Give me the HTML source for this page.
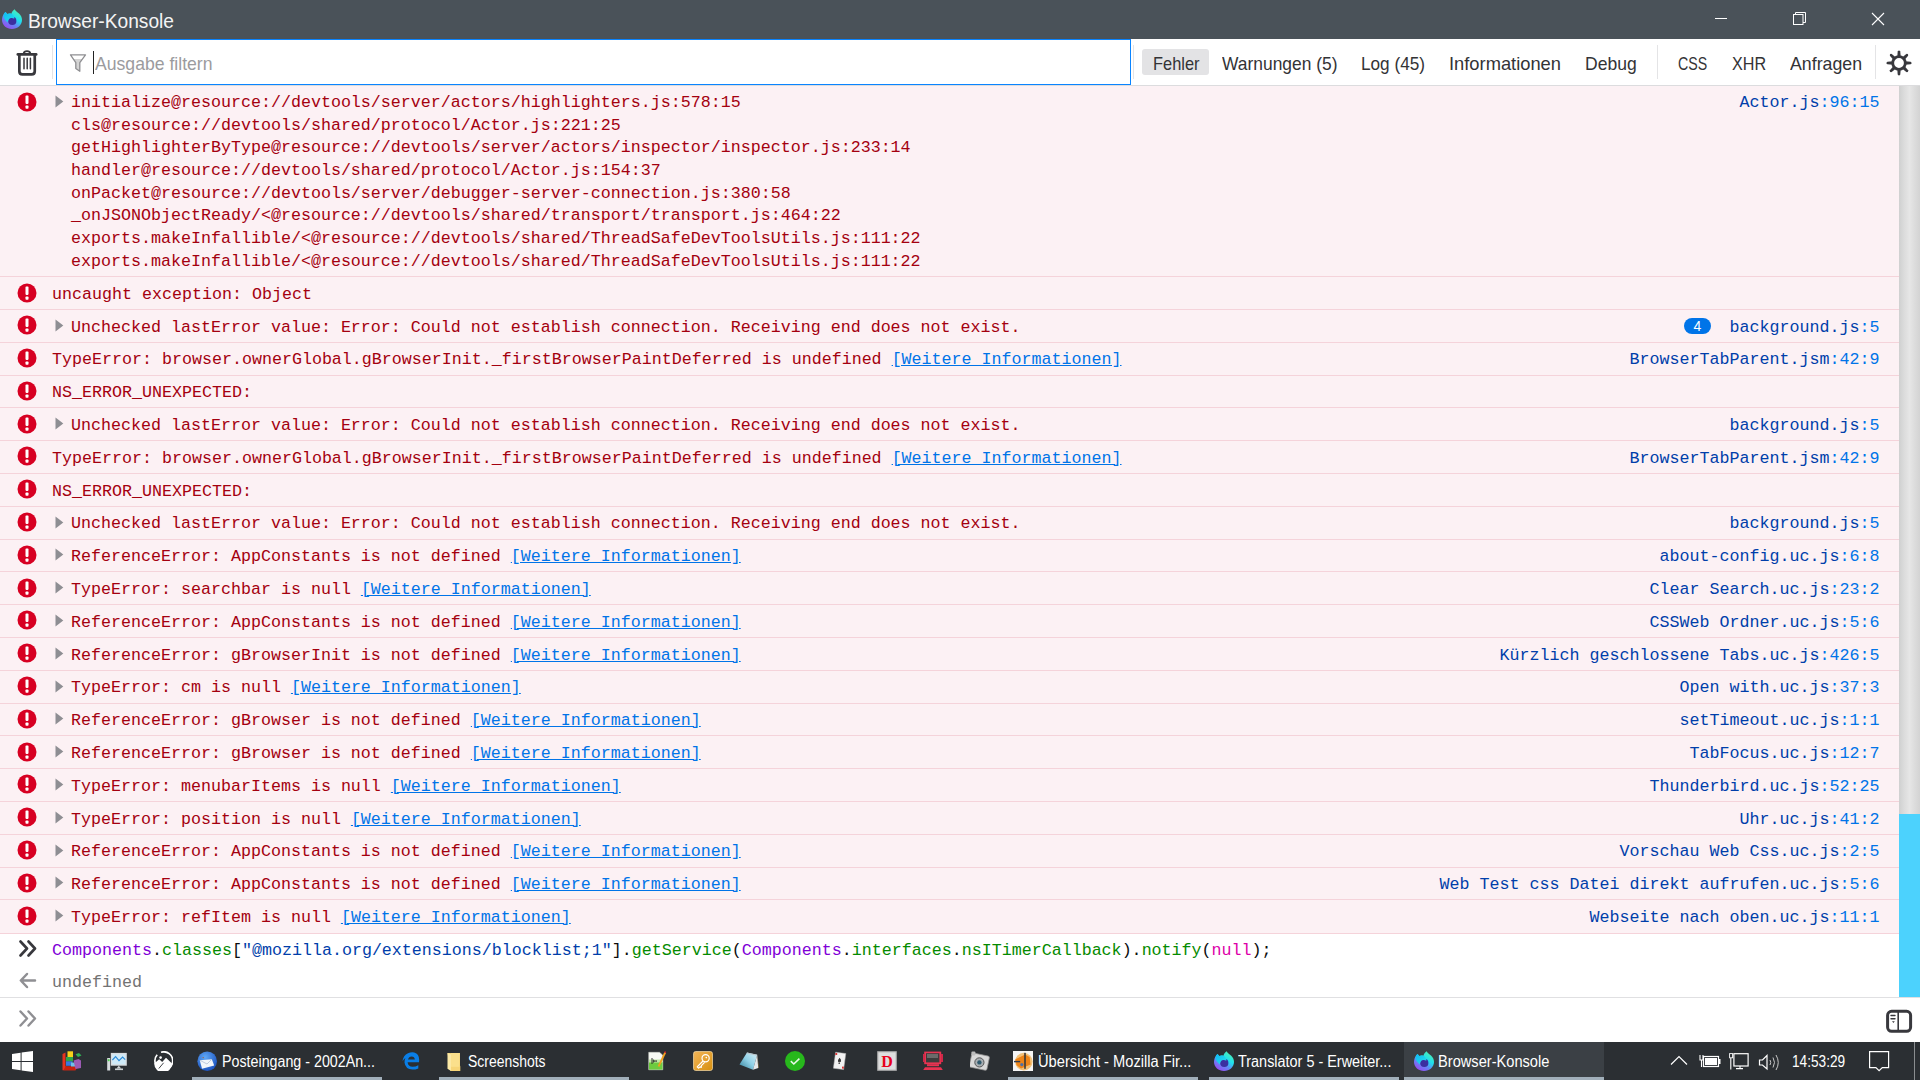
<!DOCTYPE html>
<html><head><meta charset="utf-8"><title>Browser-Konsole</title>
<style>
html,body{margin:0;padding:0;width:1920px;height:1080px;overflow:hidden;background:#fff}
.s{position:absolute;white-space:pre;font-family:'Liberation Sans', sans-serif;transform-origin:0 0}
.m{position:absolute;white-space:pre;font-family:'Liberation Mono', monospace;font-size:16.66px;line-height:20px}
</style></head><body>
<div style="position:absolute;left:0;top:0;width:1920px;height:39px;background:#4a5259"></div>
<svg width="20" height="20" viewBox="0 0 20 20" style="position:absolute;left:2px;top:9px">
<defs><linearGradient id="fg0" x1="0.85" y1="0" x2="0.2" y2="1"><stop offset="0" stop-color="#58f0a8"/><stop offset="0.4" stop-color="#1ee0ee"/><stop offset="0.68" stop-color="#6a80f6"/><stop offset="1" stop-color="#9c44ee"/></linearGradient>
<linearGradient id="fh0" x1="0" y1="0" x2="1" y2="1"><stop offset="0" stop-color="#10b8f6"/><stop offset="1" stop-color="#24e0e6"/></linearGradient></defs>
<path d="M12.6 0.2 C13.6 1.8 15.2 3.2 17 4.6 C19 6.5 20 8.6 20 11 C20 16 15.5 20 10 20 C4.5 20 0 16 0 11 C0 8.4 1 6 2.2 4.2 L3.6 3 L5.2 5 C6.6 4.3 8 4.3 9.4 4.8 C9.8 3 11 1.2 12.6 0.2 Z" fill="url(#fg0)"/>
<circle cx="10.3" cy="11.9" r="4.1" fill="#3b2fa0"/>
<path d="M2.2 4.2 L3.6 3 L5.2 5 C6.6 4.3 8 4.3 9.4 4.8 C11.5 6 12.8 8.2 12.2 9.8 C10.6 8.6 8.2 8.8 6.8 10.4 C6.1 11.2 5.9 12.3 6.1 13.4 C3.4 11.6 1.5 9.2 1.6 7 Z" fill="url(#fh0)"/>
</svg>
<div class="s" id="s0" style="left:28px;top:7.0px;font-size:21px;line-height:27px;color:#f4f4f4;transform:scaleX(0.9130);">Browser-Konsole</div>
<svg width="200" height="39" style="position:absolute;left:1700px;top:0" viewBox="0 0 200 39"><rect x="15" y="18" width="12" height="1" fill="#fff"/><rect x="93.5" y="14.5" width="9.5" height="10" fill="none" stroke="#fff" stroke-width="1"/><path d="M95.5 14.5 V12.5 H105.5 V22.5 H103" fill="none" stroke="#fff" stroke-width="1"/><path d="M172 13 L184 25 M184 13 L172 25" stroke="#fff" stroke-width="1.1"/></svg>
<div style="position:absolute;left:0;top:39px;width:1920px;height:46px;background:#fff"></div>
<div style="position:absolute;left:0;top:85px;width:1920px;height:1px;background:#dcdcde"></div>
<svg width="24" height="30" viewBox="0 0 24 30" style="position:absolute;left:15px;top:48px"><path d="M2.8 6.4 H21.2" stroke="#38383d" stroke-width="2.6" stroke-linecap="round"/><path d="M8.6 5.6 Q9 3.1 12 3.1 Q15 3.1 15.4 5.6" fill="none" stroke="#38383d" stroke-width="1.8"/><path d="M4.35 6.5 V23.3 Q4.35 26.45 7.5 26.45 H16.6 Q19.75 26.45 19.75 23.3 V6.5" fill="none" stroke="#38383d" stroke-width="2.7"/><path d="M9 10.2 V20.8 M12.2 10.2 V20.8 M15.4 10.2 V20.8" stroke="#38383d" stroke-width="1.5" stroke-linecap="round"/></svg>
<div style="position:absolute;left:52px;top:45px;width:1px;height:34px;background:#e4e4e6"></div>
<div style="position:absolute;left:56px;top:39px;width:1073px;height:44px;border:1px solid #0a84ff;background:#fff"></div>
<svg width="18" height="20" viewBox="0 0 18 20" style="position:absolute;left:69px;top:53px"><path d="M4.3 5.9 L13.5 5.9 L10.8 9.6 L10.8 18.3 L6.8 15.5 L6.8 9.6 Z" fill="#d4d4d4"/><path d="M1.5 1.8 H16.5 L10.8 9.6 V18.3 L6.8 15.5 V9.6 Z" fill="none" stroke="#8f8f92" stroke-width="1.3" stroke-linejoin="round"/></svg>
<div style="position:absolute;left:93px;top:51px;width:1.3px;height:23px;background:#222"></div>
<div class="s" id="s1" style="left:94.5px;top:51.0px;font-size:19px;line-height:25px;color:#9b9b9e;transform:scaleX(0.9270);">Ausgabe filtern</div>
<div style="position:absolute;left:1133px;top:45px;width:1px;height:34px;background:#e4e4e6"></div>
<div style="position:absolute;left:1142px;top:49px;width:67px;height:26px;background:#e3e3e5;border-radius:3px"></div>
<div class="s" id="s2" style="left:1152.5px;top:51.2px;font-size:19px;line-height:25px;color:#333336;transform:scaleX(0.8634);">Fehler</div>
<div class="s" id="s3" style="left:1222px;top:51.2px;font-size:19px;line-height:25px;color:#333336;transform:scaleX(0.9164);">Warnungen (5)</div>
<div class="s" id="s4" style="left:1361px;top:51.2px;font-size:19px;line-height:25px;color:#333336;transform:scaleX(0.9042);">Log (45)</div>
<div class="s" id="s5" style="left:1448.8px;top:51.2px;font-size:19px;line-height:25px;color:#333336;transform:scaleX(0.9640);">Informationen</div>
<div class="s" id="s6" style="left:1585px;top:51.2px;font-size:19px;line-height:25px;color:#333336;transform:scaleX(0.9232);">Debug</div>
<div style="position:absolute;left:1657px;top:45px;width:1px;height:34px;background:#e4e4e6"></div>
<div class="s" id="s7" style="left:1678.3px;top:51.2px;font-size:19px;line-height:25px;color:#333336;transform:scaleX(0.7472);">CSS</div>
<div class="s" id="s8" style="left:1731.9px;top:51.2px;font-size:19px;line-height:25px;color:#333336;transform:scaleX(0.8498);">XHR</div>
<div class="s" id="s9" style="left:1789.8px;top:51.2px;font-size:19px;line-height:25px;color:#333336;transform:scaleX(0.9348);">Anfragen</div>
<div style="position:absolute;left:1875px;top:45px;width:1px;height:34px;background:#e4e4e6"></div>
<svg width="28" height="28" viewBox="-14 -14 28 28" style="position:absolute;left:1885px;top:49px"><path d="M-1.7 -6 L-1.3 -11.6 Q0 -13.6 1.3 -11.6 L1.7 -6 Z" fill="#38383d" transform="rotate(0)"/><path d="M-1.7 -6 L-1.3 -11.6 Q0 -13.6 1.3 -11.6 L1.7 -6 Z" fill="#38383d" transform="rotate(45)"/><path d="M-1.7 -6 L-1.3 -11.6 Q0 -13.6 1.3 -11.6 L1.7 -6 Z" fill="#38383d" transform="rotate(90)"/><path d="M-1.7 -6 L-1.3 -11.6 Q0 -13.6 1.3 -11.6 L1.7 -6 Z" fill="#38383d" transform="rotate(135)"/><path d="M-1.7 -6 L-1.3 -11.6 Q0 -13.6 1.3 -11.6 L1.7 -6 Z" fill="#38383d" transform="rotate(180)"/><path d="M-1.7 -6 L-1.3 -11.6 Q0 -13.6 1.3 -11.6 L1.7 -6 Z" fill="#38383d" transform="rotate(225)"/><path d="M-1.7 -6 L-1.3 -11.6 Q0 -13.6 1.3 -11.6 L1.7 -6 Z" fill="#38383d" transform="rotate(270)"/><path d="M-1.7 -6 L-1.3 -11.6 Q0 -13.6 1.3 -11.6 L1.7 -6 Z" fill="#38383d" transform="rotate(315)"/><circle cx="0" cy="0" r="6.3" fill="none" stroke="#38383d" stroke-width="2.8"/></svg>
<div style="position:absolute;left:0;top:86px;width:1899px;height:848px;background:#fcf1f4"></div>
<svg width="20" height="20" viewBox="0 0 20 20" style="position:absolute;left:17.1px;top:91.5px"><circle cx="10" cy="10" r="9.5" fill="#d70022"/><rect x="8.5" y="3.6" width="3" height="8.3" rx="0.8" fill="#fff"/><rect x="8.5" y="13.5" width="3" height="3.2" rx="0.8" fill="#fff"/></svg>
<svg width="9" height="13" viewBox="0 0 9 13" style="position:absolute;left:55px;top:95.00px"><path d="M0.5 0.5 L8.3 6.5 L0.5 12.5 Z" fill="#8e8e93"/></svg>
<div class="m" style="left:71px;top:93.0px;color:#a4000f;">initialize@resource://devtools/server/actors/highlighters.js:578:15</div>
<div class="m" style="left:71px;top:115.69px;color:#a4000f;">cls@resource://devtools/shared/protocol/Actor.js:221:25</div>
<div class="m" style="left:71px;top:138.38px;color:#a4000f;">getHighlighterByType@resource://devtools/server/actors/inspector/inspector.js:233:14</div>
<div class="m" style="left:71px;top:161.07px;color:#a4000f;">handler@resource://devtools/shared/protocol/Actor.js:154:37</div>
<div class="m" style="left:71px;top:183.76px;color:#a4000f;">onPacket@resource://devtools/server/debugger-server-connection.js:380:58</div>
<div class="m" style="left:71px;top:206.45px;color:#a4000f;">_onJSONObjectReady/&lt;@resource://devtools/shared/transport/transport.js:464:22</div>
<div class="m" style="left:71px;top:229.14px;color:#a4000f;">exports.makeInfallible/&lt;@resource://devtools/shared/ThreadSafeDevToolsUtils.js:111:22</div>
<div class="m" style="left:71px;top:251.82999999999998px;color:#a4000f;">exports.makeInfallible/&lt;@resource://devtools/shared/ThreadSafeDevToolsUtils.js:111:22</div>
<div class="m" style="right:40.59999999999991px;top:93px;"><span style="color:#003eaa">Actor.js</span><span style="color:#0074e8">:96:15</span></div>
<div style="position:absolute;left:0;top:276px;width:1899px;height:1px;background:#f5d3da"></div>
<div style="position:absolute;left:0;top:309px;width:1899px;height:1px;background:#f5d3da"></div>
<svg width="20" height="20" viewBox="0 0 20 20" style="position:absolute;left:17.1px;top:282.5px"><circle cx="10" cy="10" r="9.5" fill="#d70022"/><rect x="8.5" y="3.6" width="3" height="8.3" rx="0.8" fill="#fff"/><rect x="8.5" y="13.5" width="3" height="3.2" rx="0.8" fill="#fff"/></svg>
<div class="m" style="left:52px;top:284.9px;color:#a4000f;">uncaught exception: Object</div>
<div style="position:absolute;left:0;top:342px;width:1899px;height:1px;background:#f5d3da"></div>
<svg width="20" height="20" viewBox="0 0 20 20" style="position:absolute;left:17.1px;top:315.29px"><circle cx="10" cy="10" r="9.5" fill="#d70022"/><rect x="8.5" y="3.6" width="3" height="8.3" rx="0.8" fill="#fff"/><rect x="8.5" y="13.5" width="3" height="3.2" rx="0.8" fill="#fff"/></svg>
<svg width="9" height="13" viewBox="0 0 9 13" style="position:absolute;left:55px;top:318.89px"><path d="M0.5 0.5 L8.3 6.5 L0.5 12.5 Z" fill="#8e8e93"/></svg>
<div class="m" style="left:71px;top:317.69px;color:#a4000f;">Unchecked lastError value: Error: Could not establish connection. Receiving end does not exist.</div>
<div class="m" style="right:40.59999999999991px;top:317.69px;"><span style="color:#003eaa">background.js</span><span style="color:#0074e8">:5</span></div>
<div style="position:absolute;left:1684px;top:318.09px;width:27px;height:16px;border-radius:8px;background:#0074e8;color:#fff;font-family:'Liberation Sans', sans-serif;font-size:14px;line-height:17px;text-align:center">4</div>
<div style="position:absolute;left:0;top:375px;width:1899px;height:1px;background:#f5d3da"></div>
<svg width="20" height="20" viewBox="0 0 20 20" style="position:absolute;left:17.1px;top:348.08px"><circle cx="10" cy="10" r="9.5" fill="#d70022"/><rect x="8.5" y="3.6" width="3" height="8.3" rx="0.8" fill="#fff"/><rect x="8.5" y="13.5" width="3" height="3.2" rx="0.8" fill="#fff"/></svg>
<div class="m" style="left:52px;top:350.48px;color:#a4000f;">TypeError: browser.ownerGlobal.gBrowserInit._firstBrowserPaintDeferred is undefined <span style="color:#0074e8;text-decoration:underline">[Weitere Informationen]</span></div>
<div class="m" style="right:40.59999999999991px;top:350.48px;"><span style="color:#003eaa">BrowserTabParent.jsm</span><span style="color:#0074e8">:42:9</span></div>
<div style="position:absolute;left:0;top:407px;width:1899px;height:1px;background:#f5d3da"></div>
<svg width="20" height="20" viewBox="0 0 20 20" style="position:absolute;left:17.1px;top:380.87px"><circle cx="10" cy="10" r="9.5" fill="#d70022"/><rect x="8.5" y="3.6" width="3" height="8.3" rx="0.8" fill="#fff"/><rect x="8.5" y="13.5" width="3" height="3.2" rx="0.8" fill="#fff"/></svg>
<div class="m" style="left:52px;top:383.27px;color:#a4000f;">NS_ERROR_UNEXPECTED:</div>
<div style="position:absolute;left:0;top:440px;width:1899px;height:1px;background:#f5d3da"></div>
<svg width="20" height="20" viewBox="0 0 20 20" style="position:absolute;left:17.1px;top:413.66px"><circle cx="10" cy="10" r="9.5" fill="#d70022"/><rect x="8.5" y="3.6" width="3" height="8.3" rx="0.8" fill="#fff"/><rect x="8.5" y="13.5" width="3" height="3.2" rx="0.8" fill="#fff"/></svg>
<svg width="9" height="13" viewBox="0 0 9 13" style="position:absolute;left:55px;top:417.26px"><path d="M0.5 0.5 L8.3 6.5 L0.5 12.5 Z" fill="#8e8e93"/></svg>
<div class="m" style="left:71px;top:416.06px;color:#a4000f;">Unchecked lastError value: Error: Could not establish connection. Receiving end does not exist.</div>
<div class="m" style="right:40.59999999999991px;top:416.06px;"><span style="color:#003eaa">background.js</span><span style="color:#0074e8">:5</span></div>
<div style="position:absolute;left:0;top:473px;width:1899px;height:1px;background:#f5d3da"></div>
<svg width="20" height="20" viewBox="0 0 20 20" style="position:absolute;left:17.1px;top:446.45px"><circle cx="10" cy="10" r="9.5" fill="#d70022"/><rect x="8.5" y="3.6" width="3" height="8.3" rx="0.8" fill="#fff"/><rect x="8.5" y="13.5" width="3" height="3.2" rx="0.8" fill="#fff"/></svg>
<div class="m" style="left:52px;top:448.85px;color:#a4000f;">TypeError: browser.ownerGlobal.gBrowserInit._firstBrowserPaintDeferred is undefined <span style="color:#0074e8;text-decoration:underline">[Weitere Informationen]</span></div>
<div class="m" style="right:40.59999999999991px;top:448.85px;"><span style="color:#003eaa">BrowserTabParent.jsm</span><span style="color:#0074e8">:42:9</span></div>
<div style="position:absolute;left:0;top:506px;width:1899px;height:1px;background:#f5d3da"></div>
<svg width="20" height="20" viewBox="0 0 20 20" style="position:absolute;left:17.1px;top:479.24px"><circle cx="10" cy="10" r="9.5" fill="#d70022"/><rect x="8.5" y="3.6" width="3" height="8.3" rx="0.8" fill="#fff"/><rect x="8.5" y="13.5" width="3" height="3.2" rx="0.8" fill="#fff"/></svg>
<div class="m" style="left:52px;top:481.64px;color:#a4000f;">NS_ERROR_UNEXPECTED:</div>
<div style="position:absolute;left:0;top:539px;width:1899px;height:1px;background:#f5d3da"></div>
<svg width="20" height="20" viewBox="0 0 20 20" style="position:absolute;left:17.1px;top:512.03px"><circle cx="10" cy="10" r="9.5" fill="#d70022"/><rect x="8.5" y="3.6" width="3" height="8.3" rx="0.8" fill="#fff"/><rect x="8.5" y="13.5" width="3" height="3.2" rx="0.8" fill="#fff"/></svg>
<svg width="9" height="13" viewBox="0 0 9 13" style="position:absolute;left:55px;top:515.63px"><path d="M0.5 0.5 L8.3 6.5 L0.5 12.5 Z" fill="#8e8e93"/></svg>
<div class="m" style="left:71px;top:514.43px;color:#a4000f;">Unchecked lastError value: Error: Could not establish connection. Receiving end does not exist.</div>
<div class="m" style="right:40.59999999999991px;top:514.43px;"><span style="color:#003eaa">background.js</span><span style="color:#0074e8">:5</span></div>
<div style="position:absolute;left:0;top:571px;width:1899px;height:1px;background:#f5d3da"></div>
<svg width="20" height="20" viewBox="0 0 20 20" style="position:absolute;left:17.1px;top:544.82px"><circle cx="10" cy="10" r="9.5" fill="#d70022"/><rect x="8.5" y="3.6" width="3" height="8.3" rx="0.8" fill="#fff"/><rect x="8.5" y="13.5" width="3" height="3.2" rx="0.8" fill="#fff"/></svg>
<svg width="9" height="13" viewBox="0 0 9 13" style="position:absolute;left:55px;top:548.42px"><path d="M0.5 0.5 L8.3 6.5 L0.5 12.5 Z" fill="#8e8e93"/></svg>
<div class="m" style="left:71px;top:547.22px;color:#a4000f;">ReferenceError: AppConstants is not defined <span style="color:#0074e8;text-decoration:underline">[Weitere Informationen]</span></div>
<div class="m" style="right:40.59999999999991px;top:547.22px;"><span style="color:#003eaa">about-config.uc.js</span><span style="color:#0074e8">:6:8</span></div>
<div style="position:absolute;left:0;top:604px;width:1899px;height:1px;background:#f5d3da"></div>
<svg width="20" height="20" viewBox="0 0 20 20" style="position:absolute;left:17.1px;top:577.61px"><circle cx="10" cy="10" r="9.5" fill="#d70022"/><rect x="8.5" y="3.6" width="3" height="8.3" rx="0.8" fill="#fff"/><rect x="8.5" y="13.5" width="3" height="3.2" rx="0.8" fill="#fff"/></svg>
<svg width="9" height="13" viewBox="0 0 9 13" style="position:absolute;left:55px;top:581.21px"><path d="M0.5 0.5 L8.3 6.5 L0.5 12.5 Z" fill="#8e8e93"/></svg>
<div class="m" style="left:71px;top:580.01px;color:#a4000f;">TypeError: searchbar is null <span style="color:#0074e8;text-decoration:underline">[Weitere Informationen]</span></div>
<div class="m" style="right:40.59999999999991px;top:580.01px;"><span style="color:#003eaa">Clear Search.uc.js</span><span style="color:#0074e8">:23:2</span></div>
<div style="position:absolute;left:0;top:637px;width:1899px;height:1px;background:#f5d3da"></div>
<svg width="20" height="20" viewBox="0 0 20 20" style="position:absolute;left:17.1px;top:610.4px"><circle cx="10" cy="10" r="9.5" fill="#d70022"/><rect x="8.5" y="3.6" width="3" height="8.3" rx="0.8" fill="#fff"/><rect x="8.5" y="13.5" width="3" height="3.2" rx="0.8" fill="#fff"/></svg>
<svg width="9" height="13" viewBox="0 0 9 13" style="position:absolute;left:55px;top:614.00px"><path d="M0.5 0.5 L8.3 6.5 L0.5 12.5 Z" fill="#8e8e93"/></svg>
<div class="m" style="left:71px;top:612.8px;color:#a4000f;">ReferenceError: AppConstants is not defined <span style="color:#0074e8;text-decoration:underline">[Weitere Informationen]</span></div>
<div class="m" style="right:40.59999999999991px;top:612.8px;"><span style="color:#003eaa">CSSWeb Ordner.uc.js</span><span style="color:#0074e8">:5:6</span></div>
<div style="position:absolute;left:0;top:670px;width:1899px;height:1px;background:#f5d3da"></div>
<svg width="20" height="20" viewBox="0 0 20 20" style="position:absolute;left:17.1px;top:643.19px"><circle cx="10" cy="10" r="9.5" fill="#d70022"/><rect x="8.5" y="3.6" width="3" height="8.3" rx="0.8" fill="#fff"/><rect x="8.5" y="13.5" width="3" height="3.2" rx="0.8" fill="#fff"/></svg>
<svg width="9" height="13" viewBox="0 0 9 13" style="position:absolute;left:55px;top:646.79px"><path d="M0.5 0.5 L8.3 6.5 L0.5 12.5 Z" fill="#8e8e93"/></svg>
<div class="m" style="left:71px;top:645.59px;color:#a4000f;">ReferenceError: gBrowserInit is not defined <span style="color:#0074e8;text-decoration:underline">[Weitere Informationen]</span></div>
<div class="m" style="right:40.59999999999991px;top:645.59px;"><span style="color:#003eaa">Kürzlich geschlossene Tabs.uc.js</span><span style="color:#0074e8">:426:5</span></div>
<div style="position:absolute;left:0;top:703px;width:1899px;height:1px;background:#f5d3da"></div>
<svg width="20" height="20" viewBox="0 0 20 20" style="position:absolute;left:17.1px;top:675.98px"><circle cx="10" cy="10" r="9.5" fill="#d70022"/><rect x="8.5" y="3.6" width="3" height="8.3" rx="0.8" fill="#fff"/><rect x="8.5" y="13.5" width="3" height="3.2" rx="0.8" fill="#fff"/></svg>
<svg width="9" height="13" viewBox="0 0 9 13" style="position:absolute;left:55px;top:679.58px"><path d="M0.5 0.5 L8.3 6.5 L0.5 12.5 Z" fill="#8e8e93"/></svg>
<div class="m" style="left:71px;top:678.38px;color:#a4000f;">TypeError: cm is null <span style="color:#0074e8;text-decoration:underline">[Weitere Informationen]</span></div>
<div class="m" style="right:40.59999999999991px;top:678.38px;"><span style="color:#003eaa">Open with.uc.js</span><span style="color:#0074e8">:37:3</span></div>
<div style="position:absolute;left:0;top:735px;width:1899px;height:1px;background:#f5d3da"></div>
<svg width="20" height="20" viewBox="0 0 20 20" style="position:absolute;left:17.1px;top:708.77px"><circle cx="10" cy="10" r="9.5" fill="#d70022"/><rect x="8.5" y="3.6" width="3" height="8.3" rx="0.8" fill="#fff"/><rect x="8.5" y="13.5" width="3" height="3.2" rx="0.8" fill="#fff"/></svg>
<svg width="9" height="13" viewBox="0 0 9 13" style="position:absolute;left:55px;top:712.37px"><path d="M0.5 0.5 L8.3 6.5 L0.5 12.5 Z" fill="#8e8e93"/></svg>
<div class="m" style="left:71px;top:711.17px;color:#a4000f;">ReferenceError: gBrowser is not defined <span style="color:#0074e8;text-decoration:underline">[Weitere Informationen]</span></div>
<div class="m" style="right:40.59999999999991px;top:711.17px;"><span style="color:#003eaa">setTimeout.uc.js</span><span style="color:#0074e8">:1:1</span></div>
<div style="position:absolute;left:0;top:768px;width:1899px;height:1px;background:#f5d3da"></div>
<svg width="20" height="20" viewBox="0 0 20 20" style="position:absolute;left:17.1px;top:741.56px"><circle cx="10" cy="10" r="9.5" fill="#d70022"/><rect x="8.5" y="3.6" width="3" height="8.3" rx="0.8" fill="#fff"/><rect x="8.5" y="13.5" width="3" height="3.2" rx="0.8" fill="#fff"/></svg>
<svg width="9" height="13" viewBox="0 0 9 13" style="position:absolute;left:55px;top:745.16px"><path d="M0.5 0.5 L8.3 6.5 L0.5 12.5 Z" fill="#8e8e93"/></svg>
<div class="m" style="left:71px;top:743.96px;color:#a4000f;">ReferenceError: gBrowser is not defined <span style="color:#0074e8;text-decoration:underline">[Weitere Informationen]</span></div>
<div class="m" style="right:40.59999999999991px;top:743.96px;"><span style="color:#003eaa">TabFocus.uc.js</span><span style="color:#0074e8">:12:7</span></div>
<div style="position:absolute;left:0;top:801px;width:1899px;height:1px;background:#f5d3da"></div>
<svg width="20" height="20" viewBox="0 0 20 20" style="position:absolute;left:17.1px;top:774.35px"><circle cx="10" cy="10" r="9.5" fill="#d70022"/><rect x="8.5" y="3.6" width="3" height="8.3" rx="0.8" fill="#fff"/><rect x="8.5" y="13.5" width="3" height="3.2" rx="0.8" fill="#fff"/></svg>
<svg width="9" height="13" viewBox="0 0 9 13" style="position:absolute;left:55px;top:777.95px"><path d="M0.5 0.5 L8.3 6.5 L0.5 12.5 Z" fill="#8e8e93"/></svg>
<div class="m" style="left:71px;top:776.75px;color:#a4000f;">TypeError: menubarItems is null <span style="color:#0074e8;text-decoration:underline">[Weitere Informationen]</span></div>
<div class="m" style="right:40.59999999999991px;top:776.75px;"><span style="color:#003eaa">Thunderbird.uc.js</span><span style="color:#0074e8">:52:25</span></div>
<div style="position:absolute;left:0;top:834px;width:1899px;height:1px;background:#f5d3da"></div>
<svg width="20" height="20" viewBox="0 0 20 20" style="position:absolute;left:17.1px;top:807.14px"><circle cx="10" cy="10" r="9.5" fill="#d70022"/><rect x="8.5" y="3.6" width="3" height="8.3" rx="0.8" fill="#fff"/><rect x="8.5" y="13.5" width="3" height="3.2" rx="0.8" fill="#fff"/></svg>
<svg width="9" height="13" viewBox="0 0 9 13" style="position:absolute;left:55px;top:810.74px"><path d="M0.5 0.5 L8.3 6.5 L0.5 12.5 Z" fill="#8e8e93"/></svg>
<div class="m" style="left:71px;top:809.54px;color:#a4000f;">TypeError: position is null <span style="color:#0074e8;text-decoration:underline">[Weitere Informationen]</span></div>
<div class="m" style="right:40.59999999999991px;top:809.54px;"><span style="color:#003eaa">Uhr.uc.js</span><span style="color:#0074e8">:41:2</span></div>
<div style="position:absolute;left:0;top:867px;width:1899px;height:1px;background:#f5d3da"></div>
<svg width="20" height="20" viewBox="0 0 20 20" style="position:absolute;left:17.1px;top:839.93px"><circle cx="10" cy="10" r="9.5" fill="#d70022"/><rect x="8.5" y="3.6" width="3" height="8.3" rx="0.8" fill="#fff"/><rect x="8.5" y="13.5" width="3" height="3.2" rx="0.8" fill="#fff"/></svg>
<svg width="9" height="13" viewBox="0 0 9 13" style="position:absolute;left:55px;top:843.53px"><path d="M0.5 0.5 L8.3 6.5 L0.5 12.5 Z" fill="#8e8e93"/></svg>
<div class="m" style="left:71px;top:842.33px;color:#a4000f;">ReferenceError: AppConstants is not defined <span style="color:#0074e8;text-decoration:underline">[Weitere Informationen]</span></div>
<div class="m" style="right:40.59999999999991px;top:842.33px;"><span style="color:#003eaa">Vorschau Web Css.uc.js</span><span style="color:#0074e8">:2:5</span></div>
<div style="position:absolute;left:0;top:899px;width:1899px;height:1px;background:#f5d3da"></div>
<svg width="20" height="20" viewBox="0 0 20 20" style="position:absolute;left:17.1px;top:872.72px"><circle cx="10" cy="10" r="9.5" fill="#d70022"/><rect x="8.5" y="3.6" width="3" height="8.3" rx="0.8" fill="#fff"/><rect x="8.5" y="13.5" width="3" height="3.2" rx="0.8" fill="#fff"/></svg>
<svg width="9" height="13" viewBox="0 0 9 13" style="position:absolute;left:55px;top:876.32px"><path d="M0.5 0.5 L8.3 6.5 L0.5 12.5 Z" fill="#8e8e93"/></svg>
<div class="m" style="left:71px;top:875.12px;color:#a4000f;">ReferenceError: AppConstants is not defined <span style="color:#0074e8;text-decoration:underline">[Weitere Informationen]</span></div>
<div class="m" style="right:40.59999999999991px;top:875.12px;"><span style="color:#003eaa">Web Test css Datei direkt aufrufen.uc.js</span><span style="color:#0074e8">:5:6</span></div>
<div style="position:absolute;left:0;top:933px;width:1899px;height:1px;background:#f5d3da"></div>
<svg width="20" height="20" viewBox="0 0 20 20" style="position:absolute;left:17.1px;top:905.51px"><circle cx="10" cy="10" r="9.5" fill="#d70022"/><rect x="8.5" y="3.6" width="3" height="8.3" rx="0.8" fill="#fff"/><rect x="8.5" y="13.5" width="3" height="3.2" rx="0.8" fill="#fff"/></svg>
<svg width="9" height="13" viewBox="0 0 9 13" style="position:absolute;left:55px;top:909.11px"><path d="M0.5 0.5 L8.3 6.5 L0.5 12.5 Z" fill="#8e8e93"/></svg>
<div class="m" style="left:71px;top:907.91px;color:#a4000f;">TypeError: refItem is null <span style="color:#0074e8;text-decoration:underline">[Weitere Informationen]</span></div>
<div class="m" style="right:40.59999999999991px;top:907.91px;"><span style="color:#003eaa">Webseite nach oben.uc.js</span><span style="color:#0074e8">:11:1</span></div>
<svg width="18" height="18" viewBox="0 0 18 18" style="position:absolute;left:19px;top:940px"><path d="M1.5 1.5 L8 8.5 L1.5 15.5 M9.5 1.5 L16 8.5 L9.5 15.5" fill="none" stroke="#38383d" stroke-width="2.6" stroke-linecap="round" stroke-linejoin="round"/></svg>
<div class="m" style="left:52px;top:941px;color:#0c0c0d;"><span style="color:#8000d7">Components</span>.<span style="color:#058b00">classes</span>[<span style="color:#003eaa">"@mozilla.org/extensions/blocklist;1"</span>].<span style="color:#058b00">getService</span>(<span style="color:#8000d7">Components</span>.<span style="color:#058b00">interfaces</span>.<span style="color:#058b00">nsITimerCallback</span>).<span style="color:#058b00">notify</span>(<span style="color:#dd00a9">null</span>);</div>
<svg width="18" height="18" viewBox="0 0 18 18" style="position:absolute;left:19px;top:972px"><path d="M8 2 L1.8 8.5 L8 15 M2 8.5 H16" fill="none" stroke="#8f8f93" stroke-width="2.5" stroke-linecap="round" stroke-linejoin="round"/></svg>
<div class="m" style="left:52px;top:973px;color:#737373;">undefined</div>
<div style="position:absolute;left:0;top:997px;width:1899px;height:1px;background:#e0e0e2"></div>
<div style="position:absolute;left:0;top:997px;width:1920px;height:1px;background:#e0e0e2"></div>
<svg width="18" height="18" viewBox="0 0 18 18" style="position:absolute;left:19px;top:1009.5px"><path d="M1.5 1.5 L8 8.5 L1.5 15.5 M9.5 1.5 L16 8.5 L9.5 15.5" fill="none" stroke="#8f8f93" stroke-width="2.4" stroke-linecap="round" stroke-linejoin="round"/></svg>
<svg width="28" height="25" viewBox="0 0 28 25" style="position:absolute;left:1885px;top:1009px"><rect x="2.6" y="2.3" width="23" height="20" rx="4" fill="none" stroke="#38383d" stroke-width="3"/><path d="M13.2 3 V22" stroke="#38383d" stroke-width="1.6"/><path d="M6 6.5 H10 M6 9.8 H10" stroke="#38383d" stroke-width="1.4" stroke-linecap="round"/><path d="M7 12.3 H9.8 L8.4 14 Z" fill="#38383d"/></svg>
<div style="position:absolute;left:1899px;top:86px;width:21px;height:728px;background:linear-gradient(90deg,#cfd0d0 0%,#dcdcdc 25%,#e6e6e6 50%,#dcdcdc 75%,#d3d3d3 100%)"></div>
<div style="position:absolute;left:1899px;top:814px;width:21px;height:183px;background:#4cd2fd"></div>
<div style="position:absolute;left:0;top:1042px;width:1920px;height:38px;background:#2b2f33"></div>
<div style="position:absolute;left:1404px;top:1042px;width:200px;height:35px;background:#3b4045"></div>
<div style="position:absolute;left:192px;top:1077px;width:190px;height:3px;background:#a1afba"></div>
<div style="position:absolute;left:439px;top:1077px;width:190px;height:3px;background:#a1afba"></div>
<div style="position:absolute;left:1008px;top:1077px;width:190px;height:3px;background:#a1afba"></div>
<div style="position:absolute;left:1209px;top:1077px;width:190px;height:3px;background:#a1afba"></div>
<div style="position:absolute;left:1404px;top:1077px;width:200px;height:3px;background:#a1afba"></div>
<svg width="21" height="21" viewBox="0 0 21 21" style="position:absolute;left:12px;top:1051px"><path d="M0 2.9 L8.6 1.7 V10 H0 Z M9.6 1.5 L21 0 V10 H9.6 Z M0 11 H8.6 V19.3 L0 18.1 Z M9.6 11 H21 V21 L9.6 19.5 Z" fill="#fff"/></svg>
<svg width="20" height="20" viewBox="0 0 20 20" style="position:absolute;left:61.5px;top:1051px"><path d="M0.5 3 L3.5 1.5 L3.5 15.5 L15.5 15.5 L13.5 19.2 L0.5 19.2 Z" fill="#e8321e"/><path d="M3.5 15.5 L15.5 15.5 L13.5 19.2 L1.5 19.2Z" fill="#c8200f"/><rect x="5.5" y="0.3" width="5.5" height="6.5" fill="#f7d21a"/><rect x="4" y="6" width="7" height="4.5" fill="#2fa548"/><rect x="4" y="10.3" width="6.5" height="4.5" fill="#3a78e0"/><rect x="9" y="11.5" width="4.5" height="4" fill="#6fc0e8"/><path d="M11.5 9.5 L16.5 8 L19 9.5 L19 17 L13.5 18 Z" fill="#9c5ab4"/><path d="M13.5 3.2 L17 2 L19.5 4.6 L16 6 Z" fill="#2fb155"/></svg>
<svg width="20" height="20" viewBox="0 0 20 20" style="position:absolute;left:106.5px;top:1051px"><rect x="3.8" y="1.9" width="16" height="12.8" fill="#d9dde0"/><rect x="5.2" y="3.3" width="13.2" height="10" fill="#cfeaf8"/><path d="M5.4 9 L8.6 5.6 L12 9.6 L15.6 6 L18.2 8.6" fill="none" stroke="#2a8ad8" stroke-width="1.1"/><path d="M9.5 17.5 L11.8 14.7 L14.2 17.5Z" fill="#cfd3d6"/><rect x="8" y="17.5" width="8" height="1.6" fill="#c8cdd0"/><rect x="0.2" y="7" width="3" height="12.5" fill="#d8dcdf"/><rect x="0.8" y="8.2" width="1.8" height="2" fill="#4fd24f"/></svg>
<svg width="20" height="20" viewBox="0 0 20 20" style="position:absolute;left:153px;top:1051px"><path d="M4.2 3.8 A8.9 8.9 0 1 0 8 1.3" fill="none" stroke="#fff" stroke-width="1.7"/><path d="M1.2 12.5 L6.2 8.2 L9.2 11 L13 6.8 L19 12.6 A8.9 8.9 0 0 1 1.2 12.5Z" fill="#fff"/><path d="M5.8 17.5 L10.6 11.8" stroke="#2b2f33" stroke-width="0.9"/><circle cx="7.6" cy="6.6" r="1.3" fill="#fff"/></svg>
<svg width="20" height="20" viewBox="0 0 20 20" style="position:absolute;left:196.8px;top:1051px"><defs><radialGradient id="tbg" cx="0.4" cy="0.3" r="0.8"><stop offset="0" stop-color="#5fa8f5"/><stop offset="1" stop-color="#1448b8"/></radialGradient></defs><circle cx="10.2" cy="10.2" r="9.8" fill="url(#tbg)"/><path d="M2.8 9.2 L14.8 8.2 L17.2 14.5 L5 17.8 Z" fill="#f2f5fa"/><path d="M2.8 9.2 L10 13 L14.8 8.2" fill="none" stroke="#b9c6da" stroke-width="0.9"/><circle cx="6.2" cy="6.6" r="0.7" fill="#b85a2a"/></svg>
<svg width="20" height="20" viewBox="0 0 20 20" style="position:absolute;left:401.5px;top:1051px"><path d="M17 11.3 H5.6 Q6 15.6 10.6 15.8 Q13.6 15.8 16.3 14.2 V17.4 Q13.6 18.6 10.4 18.6 Q3.4 18.4 2.5 11.6 Q2.4 9 3.4 7 Q1.4 8.2 0.6 10.2 Q1.2 4.2 6 2.2 Q9 0.8 12.2 1.4 Q17.2 2.6 17.2 9 Z M6 8.4 H12.8 Q12.6 5.4 9.6 5.4 Q6.8 5.5 6 8.4Z" fill="#0a7ee6"/></svg>
<svg width="20" height="20" viewBox="0 0 20 20" style="position:absolute;left:446.5px;top:1051px"><path d="M0.5 2 H13 V14.5 L13.3 15.5 V20 H3.5 Z" fill="#f7d577"/><path d="M4 2 H12.5 V15.8 H4Z" fill="#fbe08c"/><path d="M0.5 2 L4 3.2 L4 20 L0.5 17.8 Z" fill="#fce9a6"/></svg>
<svg width="20" height="20" viewBox="0 0 20 20" style="position:absolute;left:647.5px;top:1051px"><path d="M0.7 1.3 H11.5 L14.8 4.2 V18.8 H0.7 Z" fill="#f7f9f4" stroke="#c9cfc4" stroke-width="0.5"/><rect x="1" y="11" width="13.6" height="7.6" fill="#6dcb3f"/><rect x="1" y="8.5" width="13.6" height="3" fill="#c3e8a8"/><path d="M4 7 V13 M5.4 8.6 V11.6 M6.8 9.2 V11 M8.2 9.2 V11" stroke="#222" stroke-width="0.9"/><path d="M10.5 15.5 L17.2 1.5" stroke="#f0a020" stroke-width="1.8"/><circle cx="17.2" cy="1.2" r="0.9" fill="#c8202e"/></svg>
<svg width="20" height="20" viewBox="0 0 20 20" style="position:absolute;left:693px;top:1051px"><defs><linearGradient id="kg" x1="0" y1="0" x2="1" y2="1"><stop offset="0" stop-color="#f3b559"/><stop offset="1" stop-color="#d7900f"/></linearGradient></defs><rect x="0.5" y="0.5" width="19" height="19" rx="2.2" fill="url(#kg)" stroke="#f8dca8" stroke-width="0.7"/><circle cx="12.6" cy="7.2" r="3.6" fill="none" stroke="#fff" stroke-width="1.2"/><circle cx="13.3" cy="6.6" r="0.8" fill="#fff"/><path d="M10 10 L4.2 15.8 L5.6 17.2 L7 15.8 L8.2 16.4 L8.4 14.6 L11.6 11.4" fill="none" stroke="#fff" stroke-width="1.2" stroke-linejoin="round"/></svg>
<svg width="20" height="20" viewBox="0 0 20 20" style="position:absolute;left:739px;top:1051px"><defs><linearGradient id="ng" x1="0" y1="1" x2="1" y2="0"><stop offset="0" stop-color="#2f7e98"/><stop offset="0.5" stop-color="#8fd0e6"/><stop offset="1" stop-color="#d8f0f8"/></linearGradient></defs><path d="M0.5 13.5 L8 1.5 L18.2 3.8 L14 18.8 Z" fill="url(#ng)"/><path d="M18.2 3.8 L19.2 17 L14 18.8Z" fill="#e6e8ea"/><path d="M19.2 17 L18.6 4.5 L19.6 16.8Z" fill="#c9a050"/><path d="M8 1.5 L18.2 3.8 L17.8 4.8 L7.6 2.6Z" fill="#b9c4ca"/></svg>
<svg width="20" height="20" viewBox="0 0 20 20" style="position:absolute;left:785px;top:1051px"><circle cx="10" cy="10" r="10" fill="#27b81c"/><path d="M5.8 10.2 L8.8 13 L14.4 7.6" fill="none" stroke="#e8f8e6" stroke-width="1.6"/></svg>
<svg width="20" height="20" viewBox="0 0 20 20" style="position:absolute;left:832.5px;top:1051px"><path d="M2.6 1.2 L12.8 2.6 L10.6 18.6 L0.4 17.2 Z" fill="#f2f2f2" stroke="#b8b8b8" stroke-width="0.5"/><path d="M6.6 6.8 Q8.4 8.4 8 10.6 Q6.8 12 5.2 11 Q4.2 9.2 6.6 6.8Z M6.2 10.6 L5.4 13 L7 13Z" fill="#333"/><rect x="2.4" y="2" width="1.8" height="2" fill="#d33"/><rect x="9" y="15.6" width="1.8" height="2" fill="#d33"/></svg>
<svg width="20" height="20" viewBox="0 0 20 20" style="position:absolute;left:877px;top:1051px"><rect x="0.2" y="0.2" width="19.6" height="19.6" fill="#b4b4b4"/><rect x="1.4" y="1.4" width="17.2" height="17.2" fill="#dedede"/><text x="10" y="16.3" font-family="Liberation Serif" font-weight="bold" font-size="16" text-anchor="middle" fill="#e8001c">D</text></svg>
<svg width="20" height="20" viewBox="0 0 20 20" style="position:absolute;left:922.5px;top:1051px"><rect x="1.2" y="0.6" width="17" height="12.6" fill="#e83452"/><rect x="3" y="2.2" width="13.4" height="9.2" fill="#3c3c3c"/><rect x="4" y="3" width="11" height="4" fill="#6a6a6a"/><rect x="0" y="3" width="1.6" height="8" fill="#d02848"/><rect x="17.8" y="3" width="2.2" height="8" fill="#d02848"/><rect x="4" y="13.2" width="12" height="2" fill="#e83452"/><path d="M0.2 19 L2 16.2 H18 L19.8 19 Z" fill="#e83452"/></svg>
<svg width="20" height="20" viewBox="0 0 20 20" style="position:absolute;left:969.5px;top:1051px"><rect x="0.5" y="3.5" width="18" height="14.5" rx="1.6" fill="#d9d9d9" stroke="#8e8e8e" stroke-width="0.7" transform="rotate(12 10 10)"/><rect x="1.4" y="0.6" width="4" height="4" rx="1" fill="#bdbdbd"/><circle cx="9.4" cy="11.4" r="4.6" fill="#a8aeb2" stroke="#555" stroke-width="1"/><circle cx="9.4" cy="11.4" r="2.2" fill="#2f5a6e"/></svg>
<svg width="20" height="20" viewBox="0 0 20 20" style="position:absolute;left:1012.6px;top:1051px"><rect x="0" y="0" width="20.6" height="20.6" fill="#f6f6f6"/><circle cx="10.8" cy="10.6" r="8.8" fill="#f3c27a"/><path d="M2.2 8.4 L12.2 3.4 L16.6 6 L17.6 13.6 L8 17.6 L3.6 14.2 Z" fill="#ee8418"/><rect x="11.2" y="1.8" width="1.6" height="16" fill="#3a3a3a"/><path d="M1 10.6 H7.2" stroke="#2f3c52" stroke-width="1.4"/><circle cx="8.8" cy="13.6" r="1.6" fill="#4d6fa8"/></svg>
<svg width="20" height="20" viewBox="0 0 20 20" style="position:absolute;left:1214px;top:1051px">
<defs><linearGradient id="fg1" x1="0.85" y1="0" x2="0.2" y2="1"><stop offset="0" stop-color="#58f0a8"/><stop offset="0.4" stop-color="#1ee0ee"/><stop offset="0.68" stop-color="#6a80f6"/><stop offset="1" stop-color="#9c44ee"/></linearGradient>
<linearGradient id="fh1" x1="0" y1="0" x2="1" y2="1"><stop offset="0" stop-color="#10b8f6"/><stop offset="1" stop-color="#24e0e6"/></linearGradient></defs>
<path d="M12.6 0.2 C13.6 1.8 15.2 3.2 17 4.6 C19 6.5 20 8.6 20 11 C20 16 15.5 20 10 20 C4.5 20 0 16 0 11 C0 8.4 1 6 2.2 4.2 L3.6 3 L5.2 5 C6.6 4.3 8 4.3 9.4 4.8 C9.8 3 11 1.2 12.6 0.2 Z" fill="url(#fg1)"/>
<circle cx="10.3" cy="11.9" r="4.1" fill="#3b2fa0"/>
<path d="M2.2 4.2 L3.6 3 L5.2 5 C6.6 4.3 8 4.3 9.4 4.8 C11.5 6 12.8 8.2 12.2 9.8 C10.6 8.6 8.2 8.8 6.8 10.4 C6.1 11.2 5.9 12.3 6.1 13.4 C3.4 11.6 1.5 9.2 1.6 7 Z" fill="url(#fh1)"/>
</svg>
<svg width="20" height="20" viewBox="0 0 20 20" style="position:absolute;left:1414px;top:1051px">
<defs><linearGradient id="fg2" x1="0.85" y1="0" x2="0.2" y2="1"><stop offset="0" stop-color="#58f0a8"/><stop offset="0.4" stop-color="#1ee0ee"/><stop offset="0.68" stop-color="#6a80f6"/><stop offset="1" stop-color="#9c44ee"/></linearGradient>
<linearGradient id="fh2" x1="0" y1="0" x2="1" y2="1"><stop offset="0" stop-color="#10b8f6"/><stop offset="1" stop-color="#24e0e6"/></linearGradient></defs>
<path d="M12.6 0.2 C13.6 1.8 15.2 3.2 17 4.6 C19 6.5 20 8.6 20 11 C20 16 15.5 20 10 20 C4.5 20 0 16 0 11 C0 8.4 1 6 2.2 4.2 L3.6 3 L5.2 5 C6.6 4.3 8 4.3 9.4 4.8 C9.8 3 11 1.2 12.6 0.2 Z" fill="url(#fg2)"/>
<circle cx="10.3" cy="11.9" r="4.1" fill="#3b2fa0"/>
<path d="M2.2 4.2 L3.6 3 L5.2 5 C6.6 4.3 8 4.3 9.4 4.8 C11.5 6 12.8 8.2 12.2 9.8 C10.6 8.6 8.2 8.8 6.8 10.4 C6.1 11.2 5.9 12.3 6.1 13.4 C3.4 11.6 1.5 9.2 1.6 7 Z" fill="url(#fh2)"/>
</svg>
<div class="s" id="s10" style="left:221.7px;top:1051.0px;font-size:15.6px;line-height:21px;color:#ffffff;transform:scaleX(0.9144);">Posteingang - 2002An...</div>
<div class="s" id="s11" style="left:468.3px;top:1051.0px;font-size:15.6px;line-height:21px;color:#ffffff;transform:scaleX(0.8940);">Screenshots</div>
<div class="s" id="s12" style="left:1037.5px;top:1051.0px;font-size:15.6px;line-height:21px;color:#ffffff;transform:scaleX(0.9410);">Übersicht - Mozilla Fir...</div>
<div class="s" id="s13" style="left:1238.3px;top:1051.0px;font-size:15.6px;line-height:21px;color:#ffffff;transform:scaleX(0.9251);">Translator 5 - Erweiter...</div>
<div class="s" id="s14" style="left:1438.3px;top:1051.0px;font-size:15.6px;line-height:21px;color:#ffffff;transform:scaleX(0.9381);">Browser-Konsole</div>
<div class="s" id="s15" style="left:1792.4px;top:1051.0px;font-size:15.6px;line-height:21px;color:#ffffff;transform:scaleX(0.8764);">14:53:29</div>
<svg width="260" height="38" viewBox="0 0 260 38" style="position:absolute;left:1660px;top:1042px"><path d="M11 22.5 L19 14.5 L27 22.5" fill="none" stroke="#fff" stroke-width="1.2"/><rect x="43.5" y="14.5" width="15" height="10" fill="none" stroke="#fff" stroke-width="1.2"/><rect x="45" y="16" width="12" height="7" fill="#fff"/><rect x="58.5" y="17" width="2" height="5" fill="#fff"/><path d="M40 13 V18 H43 V13 M41.5 18 V25" fill="none" stroke="#fff" stroke-width="1.1"/><rect x="73.9" y="11.7" width="14.2" height="12.3" fill="none" stroke="#fff" stroke-width="1.2"/><path d="M80 24 V26.6 M76 26.6 H83 M70.8 16 V27.5" stroke="#fff" stroke-width="1.1"/><rect x="69.6" y="11.6" width="3" height="4.2" fill="none" stroke="#fff" stroke-width="0.9"/><path d="M99.5 18 H102.5 L107 13.5 V27 L102.5 23 H99.5 Z" fill="none" stroke="#fff" stroke-width="1.2"/><path d="M110 18 Q111.5 20.5 110 23 M113 15.5 Q116 20.5 113 25.5 M116 13 Q120.5 20.5 116 28" fill="none" stroke="#c8c8c8" stroke-width="1"/><path d="M209.6 9.6 H228.6 V25.6 H222.3 L219.1 28.6 L215.9 25.6 H209.6 Z" fill="none" stroke="#fff" stroke-width="1.2"/><rect x="254" y="0" width="1" height="38" fill="#8a8d90"/></svg>
</body></html>
